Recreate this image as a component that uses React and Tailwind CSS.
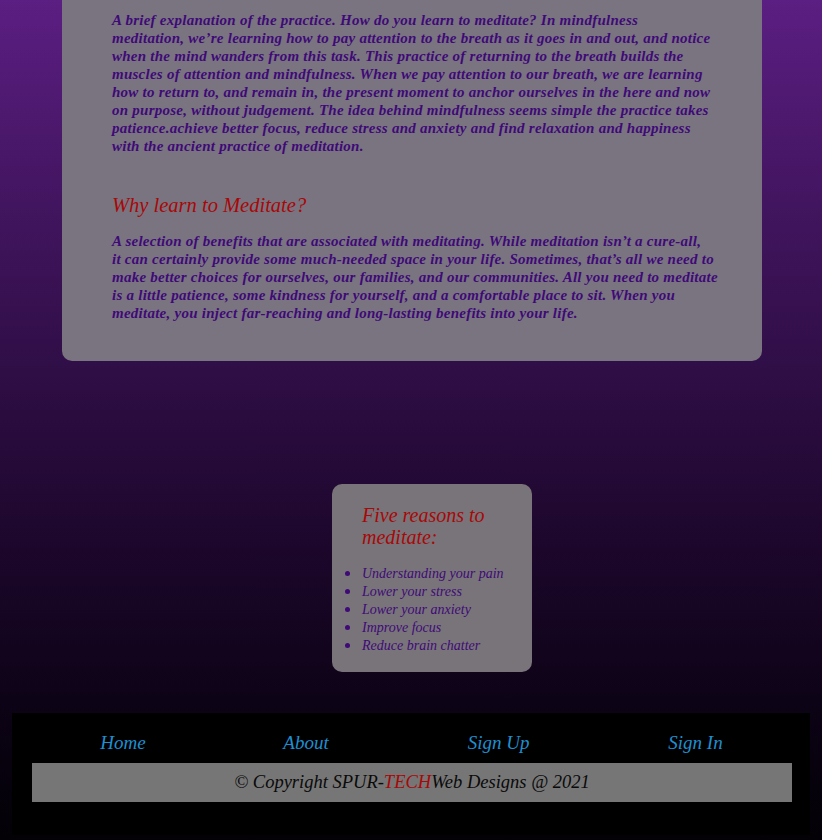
export default function App() {
  const p1 = [
    "A brief explanation of the practice. How do you learn to meditate? In mindfulness",
    "meditation, we’re learning how to pay attention to the breath as it goes in and out, and notice",
    "when the mind wanders from this task. This practice of returning to the breath builds the",
    "muscles of attention and mindfulness. When we pay attention to our breath, we are learning",
    "how to return to, and remain in, the present moment to anchor ourselves in the here and now",
    "on purpose, without judgement. The idea behind mindfulness seems simple the practice takes",
    "patience.achieve better focus, reduce stress and anxiety and find relaxation and happiness",
    "with the ancient practice of meditation.",
  ];
  const p2 = [
    "A selection of benefits that are associated with meditating. While meditation isn’t a cure-all,",
    "it can certainly provide some much-needed space in your life. Sometimes, that’s all we need to",
    "make better choices for ourselves, our families, and our communities. All you need to meditate",
    "is a little patience, some kindness for yourself, and a comfortable place to sit. When you",
    "meditate, you inject far-reaching and long-lasting benefits into your life.",
  ];
  const reasons = [
    "Understanding your pain",
    "Lower your stress",
    "Lower your anxiety",
    "Improve focus",
    "Reduce brain chatter",
  ];
  const serif = { fontFamily: '"Liberation Serif", "DejaVu Serif", serif' };
  return (
    <div
      className="w-[822px] h-[840px] overflow-hidden bg-gradient-to-b from-[#5b1e82] to-[#030106] italic"
      style={serif}
    >
      <div className="mx-[62px] w-[700px] h-[361px] bg-[#7a7480] rounded-b-[10px] px-[50px] pt-[11px]">
        <p className="text-[#3f0a78] font-bold text-[15px] leading-[18px] whitespace-nowrap tracking-[0.25px]">
          {p1.map((l, i) => (
            <span key={i} className="block">{l}</span>
          ))}
        </p>
        <h2 className="text-[#a80808] text-[20.5px] leading-[24px] mt-[38px]">Why learn to Meditate?</h2>
        <p className="text-[#3f0a78] font-bold text-[15px] leading-[18px] whitespace-nowrap mt-[15px] tracking-[0.25px]">
          {p2.map((l, i) => (
            <span key={i} className="block">{l}</span>
          ))}
        </p>
      </div>
      <div className="mt-[123px] ml-[332px] w-[200px] h-[188px] bg-[#787479] rounded-[10px] pl-[30px] pt-[20px]">
        <h3 className="text-[#a80808] text-[20px] leading-[22px]">
          Five reasons to
          <br />
          meditate:
        </h3>
        <ul className="mt-[17px] text-[#3f0a78] text-[14px] leading-[18px]">
          {reasons.map((r) => (
            <li key={r} className="flex items-center relative">
              <span className="absolute left-[-17px] top-[6px] w-[5px] h-[5px] rounded-full bg-[#3f0a78]" />
              {r}
            </li>
          ))}
        </ul>
      </div>
      <div className="mt-[41px] mx-[12px] h-[122px] bg-black pt-[18px] pl-[20px] pr-[18px]">
        <nav className="flex text-[#1e8fd0] text-[19px] leading-[24px]">
          <a className="w-[182px] text-center">Home</a>
          <a className="w-[184px] text-center">About</a>
          <a className="w-[201px] text-center">Sign Up</a>
          <a className="w-[193px] text-center">Sign In</a>
        </nav>
        <div className="mt-[8px] h-[39px] bg-[#767676] flex items-center justify-center text-[#0a0a0a] text-[18.5px]">
          © Copyright SPUR-<span className="text-[#a80808]">TECH</span>Web Designs @ 2021
        </div>
      </div>
    </div>
  );
}
